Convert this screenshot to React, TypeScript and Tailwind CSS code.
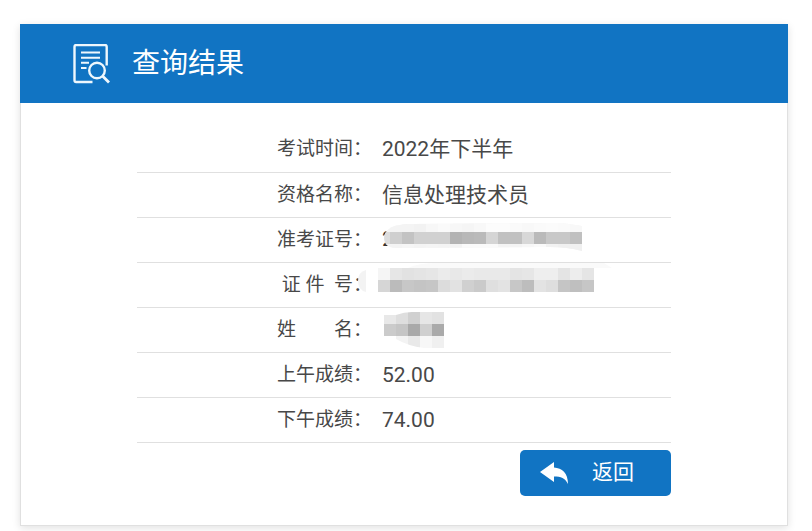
import type { ReactNode } from "react";

type Cell = [x: number, y: number, fill: string];

const SIZE = 12;

const TICKET: Cell[] = [
    ...["#f4f4f4", "#f4f4f4", "#f2f2f2", "#f7f7f7", "#fafafa", "#f7f7f7", "#f5f5f5", "#f8f8f8", "#fcfcfc", "#fcfcfc", "#fafafa", "#f8f8f8", "#fafafa", "#fbfbfb", "#fafafa", "#f8f8f8"].map((f, i): Cell => [i + 1, 0, f]),
    ...["#dddddd", "#cfcfcf", "#c3c3c3", "#d1d1d1", "#d1d1d1", "#d1d1d1", "#b3b3b3", "#b8b8b8", "#bababa", "#d5d5d5", "#c1c1c1", "#c1c1c1", "#d8d8d8", "#bababa", "#c8c8c8", "#c8c8c8", "#c0c0c0"].map((f, i): Cell => [i, 1, f]),
    ...["#f4f4f4", "#f6f6f6", "#f4f4f4", "#f5f5f5", "#f4f4f4", "#f3f3f3", "#fafafa", "#fafafa", "#fafafa", "#f4f4f4", "#f4f4f4", "#f7f7f7", "#fafafa", "#f2f2f2", "#f0f0f0", "#f0f0f0"].map((f, i): Cell => [i + 1, 2, f]),
];

const IDENTITY: Cell[] = [
    ...["#f5f5f5", "#e6e6e6", "#e2e2e2", "#e4e4e4", "#e6e6e6", "#ebebeb", "#e8e8e8", "#ebebeb", "#e9e9e9", "#e9e9e9", "#e9e9e9", "#e4e4e4", "#e6e6e6", "#eeeeee", "#eeeeee", "#e4e4e4", "#ededed", "#e5e5e5"].map((f, i): Cell => [i, 0, f]),
    ...["#d6d6d6", "#bbbbbb", "#c7c7c7", "#c4c4c4", "#c6c6c6", "#dcdcdc", "#e2e2e2", "#d0d0d0", "#cacaca", "#dfdfdf", "#e3e3e3", "#c7c7c7", "#bdbdbd", "#e3e3e3", "#dedede", "#c5c5c5", "#bfbfbf", "#c6c6c6"].map((f, i): Cell => [i, 1, f]),
];

const NAME: Cell[] = [
    [0, 0, "#e8e8e8"], [1, 0, "#dedede"], [2, 0, "#d0d0d0"], [3, 0, "#e6e6e6"], [4, 0, "#e2e2e2"],
    [0, 1, "#cbcbcb"], [1, 1, "#c5c5c5"], [2, 1, "#a9a9a9"], [3, 1, "#cfcfcf"], [4, 1, "#aaaaaa"],
    [1, 2, "#f3f3f3"], [2, 2, "#e9e9e9"], [3, 2, "#f7f7f7"], [4, 2, "#f0f0f0"],
];

function Cells({ cells }: { cells: Cell[] }) {
    return (
        <>
            {cells.map(([x, y, fill]) => (
                <rect key={`${x}-${y}`} x={x * SIZE} y={y * SIZE} width={SIZE} height={SIZE} fill={fill} shapeRendering="crispEdges" />
            ))}
        </>
    );
}

function TicketMask() {
    return (
        <svg className="h-9 w-[204px] overflow-visible" viewBox="4 2 204 36" aria-hidden="true">
            <clipPath id="ticket">
                <path d="M8 12Q12 5 30 4L184 3L204 6V31Q190 27 170 27L20 28Q10 28 8 24Q4 18 8 12Z" />
            </clipPath>
            <text x="4" y="26" fontSize="21" fill="#333">2</text>
            <g clipPath="url(#ticket)">
                <rect width="204" height="36" fill="#f4f4f4" />
                <Cells cells={TICKET} />
            </g>
        </svg>
    );
}

function IdentityMask() {
    return (
        <svg className="h-9 w-[216px] overflow-visible" viewBox="4 -1 216 36" aria-hidden="true">
            <path d="M30 0Q40 -5 60 -5H226L234 0Z" fill="#fafafa" />
            <path d="M-12 2V24Q-20 22 -20 13T-12 2Z" fill="#f3f3f3" />
            <Cells cells={IDENTITY} />
        </svg>
    );
}

function NameMask() {
    return (
        <svg className="h-9 w-[60px] overflow-visible" viewBox="-2 0 60 36" aria-hidden="true">
            <clipPath id="name">
                <path d="M0 3H12Q20 0 28 0H60V36H40Q24 34 12 27L0 24Z" />
            </clipPath>
            <g clipPath="url(#name)">
                <Cells cells={NAME} />
            </g>
        </svg>
    );
}

function ResultIcon() {
    return (
        <svg className="h-10 w-[37px]" viewBox="0 0 37 40" fill="none" stroke="#eef7fd" strokeWidth="2.4" aria-hidden="true">
            <path d="M19.5 38H3.2Q1.5 38 1.5 36.3V2.7Q1.5 1 3.2 1H32Q33.7 1 33.7 2.7V21.5" />
            <path d="M8 8.5H27M8 13.7H27M8 18.8H16M8 24H13.5" strokeWidth="2" />
            <circle cx="24" cy="26.5" r="7.8" />
            <path d="M29.5 32L36 38.6" strokeWidth="2.8" />
        </svg>
    );
}

function BackIcon() {
    return (
        <svg className="h-[22px] w-7" viewBox="0 0 28 22" fill="#fff" aria-hidden="true">
            <path d="M0 10L14 0V5.5C22 6 28 11 28 22C25 16 21 14.5 14 14.5V20Z" />
        </svg>
    );
}

function Row({ label, children }: { label: string; children: ReactNode }) {
    return (
        <tr className="h-[45px] border-b border-[#e0e0e0]">
            <th scope="row" className="w-[44%] whitespace-pre p-0 text-right text-[19px] leading-7 font-normal">
                {label}
            </th>
            <td className="p-0 pl-2.5 text-[21px] leading-7">{children}</td>
        </tr>
    );
}

export default function App() {
    return (
        <main className="bg-white px-5 pt-6 pb-[5px] font-['Roboto','Noto_Sans_CJK_SC',sans-serif] text-[#484848]">
            <section className="mr-1 border border-[#e0e0e0] border-t-0 bg-white shadow-[0_2px_8px_rgba(0,0,0,0.12)]">
                <header className="-mx-px flex h-[79px] items-center gap-[22px] bg-[#1174c3] pl-[53px] text-white">
                    <ResultIcon />
                    <h1 className="text-[28px] leading-10 font-normal">查询结果</h1>
                </header>

                <div className="mx-auto max-w-[534px] pt-6 pb-[29px]">
                    <table className="w-full border-collapse">
                        <tbody>
                            <Row label="考试时间：">2022年下半年</Row>
                            <Row label="资格名称：">信息处理技术员</Row>
                            <Row label="准考证号："><TicketMask /></Row>
                            <Row label="证 件  号："><IdentityMask /></Row>
                            <Row label="姓　　名："><NameMask /></Row>
                            <Row label="上午成绩：">52.00</Row>
                            <Row label="下午成绩：">74.00</Row>
                        </tbody>
                    </table>
                    <button type="button" className="mt-[7px] ml-auto flex h-[46px] w-[151px] items-center gap-6 rounded-[5px] bg-[#1174c3] pl-5 text-[21px] text-white">
                        <BackIcon />
                        返回
                    </button>
                </div>
            </section>
        </main>
    );
}
